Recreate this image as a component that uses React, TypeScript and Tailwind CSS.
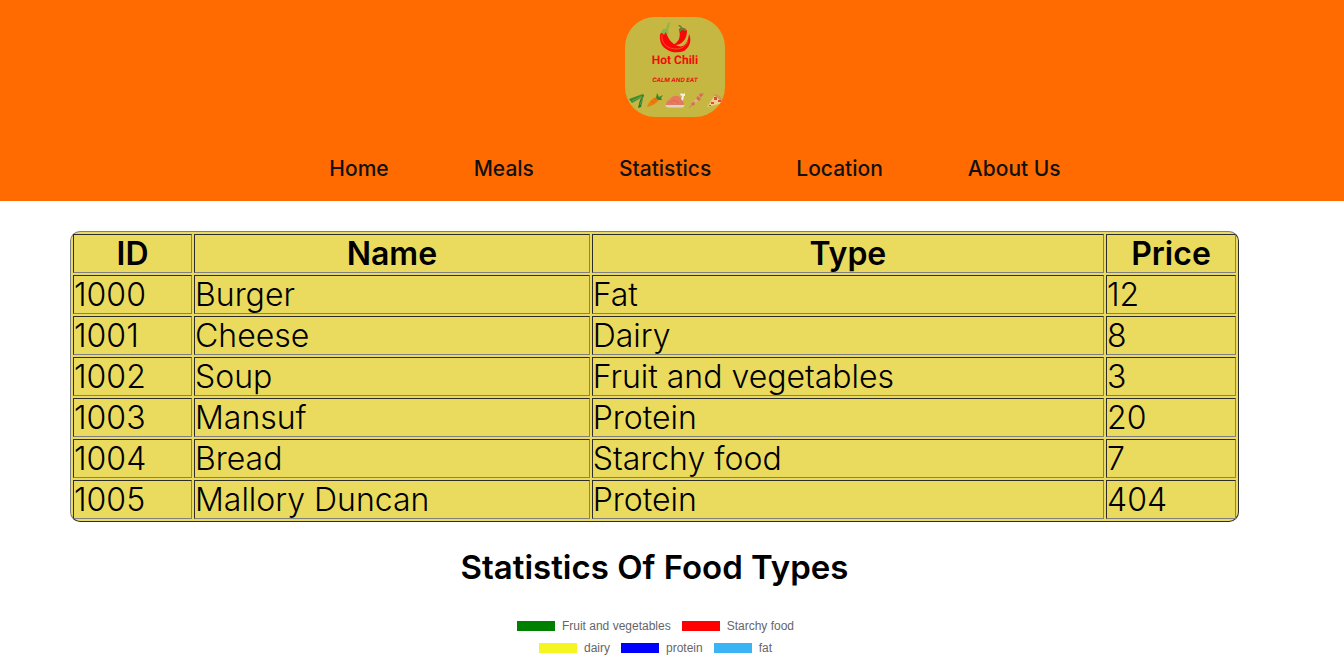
const links = ["Home", "Meals", "Statistics", "Location", "About Us"];

const meals = [
  { id: 1000, name: "Burger", type: "Fat", price: 12 },
  { id: 1001, name: "Cheese", type: "Dairy", price: 8 },
  { id: 1002, name: "Soup", type: "Fruit and vegetables", price: 3 },
  { id: 1003, name: "Mansuf", type: "Protein", price: 20 },
  { id: 1004, name: "Bread", type: "Starchy food", price: 7 },
  { id: 1005, name: "Mallory Duncan", type: "Protein", price: 404 },
];

const legendRows = [
  [
    { label: "Fruit and vegetables", color: "bg-[#008000]" },
    { label: "Starchy food", color: "bg-[#ff0000]" },
  ],
  [
    { label: "dairy", color: "bg-[#f5f522]" },
    { label: "protein", color: "bg-[#0000ff]" },
    { label: "fat", color: "bg-[#3ab4f5]" },
  ],
];

const cell =
  "border border-t-[#2c2c2c] border-l-[#2c2c2c] border-r-[#808080] border-b-[#808080] p-0";

function Logo() {
  return (
    <svg viewBox="0 0 100 100" className="size-[100px] rounded-[30px]" role="img" aria-label="Hot Chili">
      <rect width="100" height="100" fill="#c5b741" />
      {/* chilies */}
      <path d="M35 22C34 16 38 12 41 15C43 22 47 27 53 29C59 31 63 26 64 17C67 23 65 30 59 34C49 38 36 33 35 22Z" fill="#fb0505" />
      <path d="M54 12C56 10 61 11 62 14C62 22 57 29 48 28C54 25 56 20 54 12Z" fill="#f50808" />
      <path d="M43 30C51 34 60 32 63 24" fill="none" stroke="#d98a3a" strokeWidth=".6" />
      <path d="M37 18C36 22 39 28 43 30" fill="none" stroke="#ff6b4a" strokeWidth=".7" />
      <path d="M35 17L38 12L41 12L43 6L45 5.5L43 13L44 18L41 15L39 18L37 16Z" fill="#80b84c" />
      <path d="M54 13L56 11L53 8L55 8L58 11L61 12L61 14L57 13L55 15Z" fill="#4e8a37" />
      <text x="50" y="47" textAnchor="middle" textRendering="geometricPrecision" fill="#f50a05" className="font-['Roboto'] text-[12px] font-bold">Hot Chili</text>
      <text x="50" y="65" textAnchor="middle" textRendering="geometricPrecision" fill="#e81410" className="font-['Inter'] text-[6px] font-bold italic">CALM AND EAT</text>
      {/* green beans */}
      <path d="M4 82L18 77L19 79L7 86Z" fill="#3b8b32" />
      <path d="M19 77L16 90L13 91L15 83Z" fill="#26752e" />
      <path d="M7 84L17 79M15 88L18 80" stroke="#80ad55" strokeWidth=".7" />
      {/* carrot */}
      <path d="M22 90C23 86 28 80 32 80L34 83C31 87 26 89 22 90Z" fill="#f07b0c" />
      <path d="M31 81L32 76L34 80L38 78L36 81L37 83L33 83Z" fill="#39842e" />
      <path d="M27 84L29 86M30 82L31 84" stroke="#c56010" strokeWidth=".6" />
      {/* roast */}
      <path d="M40 88H60L58 90.5H42Z" fill="#ddd7c8" />
      <path d="M41 88C41 84 44 83 46 81C49 77 56 79 58 83L59 88Z" fill="#e67a5e" />
      <path d="M56 82L57 79L55 78L56 76L58 77L60 76L60 79L59 79L58 84Z" fill="#f4eee0" />
      <path d="M45 86L49 83L54 86" fill="none" stroke="#d2604e" strokeWidth=".6" />
      {/* skewer */}
      <path d="M64 91L79 76" stroke="#a3824e" strokeWidth=".7" />
      <path d="M66 87L68 85L70 87L68 89Z" fill="#df6761" />
      <path d="M69 84L71 82L73 84L71 86Z" fill="#e7b282" />
      <path d="M71 81L73 79L76 82L74 84Z" fill="#dd6961" />
      <path d="M74 78L76 76L78 78L76 80Z" fill="#d8655c" />
      {/* pizza */}
      <path d="M82 90L90 78L98 86Z" fill="#f0cf8c" />
      <path d="M89 77C94 77 98 81 99 86L97 87C95 83 93 80 89 79Z" fill="#d29a50" />
      <path d="M86 85h3v2h-3zM89 80h3v3h-3zM93 83h3v2h-3zM84 88h2v1h-2z" fill="#dc4a48" />
    </svg>
  );
}

export default function App() {
  return (
    <div className="min-h-screen bg-white font-['Inter',sans-serif] text-black">
      <header className="flex flex-col items-center bg-[#ff6b00] pt-[17px] pb-4">
        <a href="#home" className="ml-1.5">
          <Logo />
        </a>
        <nav className="mt-9 ml-[46px]">
          <ul className="flex gap-[85px] text-[21px] leading-8 font-medium text-[#111]">
            {links.map((link) => (
              <li key={link}>
                <a href="#home">{link}</a>
              </li>
            ))}
          </ul>
        </nav>
      </header>

      <main className="pt-[30px] pr-[105px] pl-[70px]">
        <table className="w-full table-fixed border-separate border-spacing-[2px] rounded-[10px] border border-t-[#808080] border-l-[#808080] border-r-[#2c2c2c] border-b-[#2c2c2c] bg-[#eadb5e] text-left text-[32px] leading-[37px] font-light">
          <colgroup>
            <col className="w-[119px]" />
            <col className="w-[34.2%]" />
            <col />
            <col className="w-[130px]" />
          </colgroup>
          <thead>
            <tr className="text-center">
              <th scope="col" className={`${cell} font-semibold`}>ID</th>
              <th scope="col" className={`${cell} font-semibold`}>Name</th>
              <th scope="col" className={`${cell} font-semibold`}>Type</th>
              <th scope="col" className={`${cell} font-semibold`}>Price</th>
            </tr>
          </thead>
          <tbody>
            {meals.map((meal) => (
              <tr key={meal.id}>
                <td className={cell}>{meal.id}</td>
                <td className={cell}>{meal.name}</td>
                <td className={cell}>{meal.type}</td>
                <td className={cell}>{meal.price}</td>
              </tr>
            ))}
          </tbody>
        </table>

        <section>
          <h1 className="mt-[25px] text-center text-[33px] leading-10 font-semibold">Statistics Of Food Types</h1>
          <div className="mt-7 flex flex-col pl-0.5 font-['Liberation_Sans',sans-serif] text-xs leading-[22px] text-[#666]">
            {legendRows.map((row, index) => (
              <ul key={index} className="flex justify-center gap-[11px]">
                {row.map((item) => (
                  <li key={item.label} className="flex items-center gap-[7px]">
                    <span className={`h-2.5 w-[38px] ${item.color}`} />
                    {item.label}
                  </li>
                ))}
              </ul>
            ))}
          </div>
        </section>
      </main>
    </div>
  );
}
